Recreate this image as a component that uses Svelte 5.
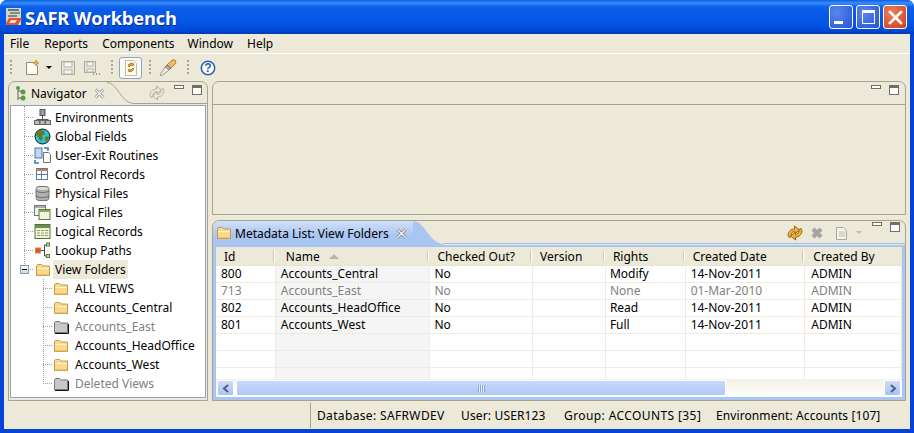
<script>
  const tree = [
    ['env', 'Environments'], ['globe', 'Global Fields'], ['exit', 'User-Exit Routines'], ['ctl', 'Control Records'],
    ['db', 'Physical Files'], ['lf', 'Logical Files'], ['lr', 'Logical Records'], ['lp', 'Lookup Paths']
  ];
  const folders = [
    ['ALL VIEWS', false], ['Accounts_Central', false], ['Accounts_East', true],
    ['Accounts_HeadOffice', false], ['Accounts_West', false], ['Deleted Views', true]
  ];
  const cols = [
    { t: 'Id', w: 60 }, { t: 'Name', w: 155, sort: true }, { t: 'Checked Out?', w: 103 }, { t: 'Version', w: 73 },
    { t: 'Rights', w: 80 }, { t: 'Created Date', w: 120 }, { t: 'Created By', w: 97 }
  ];
  const rows = [
    ['800', 'Accounts_Central', 'No', '', 'Modify', '14-Nov-2011', 'ADMIN', false],
    ['713', 'Accounts_East', 'No', '', 'None', '01-Mar-2010', 'ADMIN', true],
    ['802', 'Accounts_HeadOffice', 'No', '', 'Read', '14-Nov-2011', 'ADMIN', false],
    ['801', 'Accounts_West', 'No', '', 'Full', '14-Nov-2011', 'ADMIN', false],
    ['', '', '', '', '', '', '', false],
    ['', '', '', '', '', '', '', false],
    ['', '', '', '', '', '', '', false]
  ];
</script>

{#snippet folder(gray)}
  <svg class="ic" width="16" height="16" viewBox="0 0 16 16">
    {#if gray}
      <path d="M1.500 13.500V4l1-1.500h4L8 4h6.500v9.500z" fill="#c8c8c8" stroke="#777"/>
      <path d="M2 14.500h13.500V5" fill="none" stroke="#111"/>
    {:else}
      <path d="M1.500 13.500V4l1-1.500h4L8 4h6.500v9.500z" fill="#fbd98a" stroke="#c29a4f"/>
      <path d="M2.500 6.500h11" stroke="#fff3cf"/>
      <path d="M2 13h12" stroke="#e8a94a"/>
    {/if}
  </svg>
{/snippet}

{#snippet minmax()}
  <span class="minmax">
    <svg width="10" height="4" viewBox="0 0 10 4"><rect x="0.500" y="0.500" width="9" height="3" fill="#fff" stroke="#716f64"/></svg>
    <svg width="10" height="10" viewBox="0 0 10 10"><rect x="0.500" y="0.500" width="9" height="9" fill="#fff" stroke="#716f64"/><path d="M1 2h8" stroke="#716f64" stroke-width="2"/></svg>
  </span>
{/snippet}

{#snippet sync(c1, c2)}
  <svg width="16" height="16" viewBox="0 0 16 16">
    <path d="M1 10.500C1 6.500 4 4 7.500 4V1l5 4-5 4V6.500C5.500 6.500 4 8 4 10.500L2.500 13z" fill={c1} stroke={c2} stroke-linejoin="round"/>
    <path d="M15 5.500C15 9.500 12 12 8.500 12v3l-5-4 5-4v2.500C10.500 9.500 12 8 12 5.500L13.500 3z" fill={c1} stroke={c2} stroke-linejoin="round"/>
  </svg>
{/snippet}

{#snippet treeIcon(k)}
  <svg class="ic" width="17" height="17" viewBox="0 0 17 17">
    {#if k === 'env'}
      <rect x="6" y="0.500" width="5" height="6" fill="#99a" stroke="#556"/>
      <path d="M8.500 7v3M2.500 10.500h12" stroke="#555" fill="none"/>
      <rect x="0.500" y="11.500" width="5" height="4" fill="#bbb" stroke="#666"/>
      <rect x="6" y="11.500" width="5" height="4" fill="#bbb" stroke="#666"/>
      <rect x="11.500" y="11.500" width="5" height="4" fill="#bbb" stroke="#666"/>
    {:else if k === 'globe'}
      <circle cx="8.500" cy="8.500" r="7.500" fill="#28c4e0" stroke="#111"/>
      <path d="M5 2l5 1 1 3-3 2 1 3-3 2-2-4-2-2zM11 9l4-1-1 4-3 2z" fill="#6a7a20"/>
    {:else if k === 'exit'}
      <rect x="1" y="1" width="7" height="10" fill="#bcd8f4" stroke="#4a78b8"/>
      <path d="M9.500 5.500h5l2 2v8h-7z" fill="#fff" stroke="#66785a"/>
      <path d="M10 1h4v3M1 13v3h4" fill="none" stroke="#3a70c0" stroke-width="1.500"/>
    {:else if k === 'ctl'}
      <rect x="2.500" y="2.500" width="11" height="11" fill="#fff" stroke="#567ca8"/>
      <path d="M2 3h12v2H2z" fill="#cc7a50"/>
      <path d="M3 8.500h10M7.500 5v8" stroke="#567ca8"/>
    {:else if k === 'db'}
      <rect x="2" y="1.500" width="13" height="14" rx="3" fill="#b0b0ac" stroke="#777"/>
      <path d="M2 6c3 2 10 2 13 0M2 11c3 2 10 2 13 0" fill="none" stroke="#666"/>
      <ellipse cx="8.500" cy="3.500" rx="6" ry="1.500" fill="#ddd"/>
    {:else if k === 'lf'}
      <rect x="0.500" y="1.500" width="11" height="10" fill="#f4f4ee" stroke="#777"/>
      <path d="M1 3h10" stroke="#aaa" stroke-width="2"/>
      <rect x="5" y="5.500" width="11" height="10" fill="#f1f3de" stroke="#5a7a3c"/>
      <path d="M5 7h11" stroke="#8caa5a" stroke-width="2"/>
    {:else if k === 'lr'}
      <rect x="1" y="1.500" width="15" height="14" fill="#f0f3da" stroke="#55703a"/>
      <path d="M1 3.500h15" stroke="#6e8f49" stroke-width="3"/>
      <path d="M3 7.500h11M3 10h11M3 12.500h11" stroke="#8aa060" stroke-dasharray="3 1"/>
    {:else}
      <rect x="1.500" y="6" width="5" height="5" fill="#e0553a" stroke="#c98a30"/>
      <path d="M7 8.500h3M10.500 3v11M10.500 3h2M10.500 14h2" stroke="#444" fill="none"/>
      <rect x="12.500" y="1" width="3" height="3" fill="#cde0a0" stroke="#557a2c"/>
      <rect x="12.500" y="12.500" width="3" height="3" fill="#cde0a0" stroke="#557a2c"/>
    {/if}
  </svg>
{/snippet}

<div class="win">
  <header class="title">
    <svg class="logo" width="17" height="18" viewBox="0 0 17 18">
      <rect x="1" y="0" width="15" height="17" fill="#d8d4c8"/>
      <path d="M3 2h11" stroke="#2a5a9a" stroke-width="1.500"/><path d="M5 5h10" stroke="#5a8a3a" stroke-width="1.500"/><path d="M3 8h9" stroke="#333"/>
      <path d="M4 10h13l-4 7H0z" fill="#e0552f"/>
      <path d="M6 12h6l-2 3H4z" fill="#f8e0d0"/>
    </svg>
    <span class="tt">SAFR Workbench</span>
    <span class="btns">
      <span class="wb blue"><i class="mn"></i></span>
      <span class="wb blue"><i class="mx"></i></span>
      <span class="wb red">
        <svg width="15" height="15" viewBox="0 0 15 15"><path d="M2 2l11 11M13 2L2 13" stroke="#fff" stroke-width="2.600" stroke-linecap="square"/></svg>
      </span>
    </span>
  </header>

  <div class="body">
    <nav class="menu">
      <span>File</span><span>Reports</span><span>Components</span><span>Window</span><span>Help</span>
    </nav>

    <div class="tools">
      <i class="grip g1"></i>
      <svg width="18" height="18" viewBox="0 0 18 18"><path d="M1.500 3.500h8l3 3v9h-11z" fill="#fdfdf2" stroke="#8a8f80"/><path d="M11 1l1 2 2 1-2 1-1 2-1-2-2-1 2-1z" fill="#f0b030" stroke="#b07810" stroke-width=".5"/></svg>
      <i class="caret"></i>
      <svg class="disk" width="16" height="16" viewBox="0 0 16 16"><path d="M1.500 1.500h13v13h-13z" fill="#e8e6da" stroke="#a8a89c"/><path d="M4 2h8v5H4zM4 10h8v4H4z" fill="#f6f6f0" stroke="#b4b4a8"/></svg>
      <svg class="disk2" width="18" height="16" viewBox="0 0 18 16"><path d="M1.500 1.500h11v11h-11z" fill="#e8e6da" stroke="#a8a89c"/><path d="M4 2h6v4H4zM4 9h6v3H4z" fill="#f6f6f0" stroke="#b4b4a8"/><path d="M10 14h1M13 14h1M16 14h1" stroke="#999" stroke-width="2"/></svg>
      <i class="grip g2"></i>
      <span class="toggled">
        <svg width="16" height="16" viewBox="0 0 16 16"><path d="M2.500 .5h8l3 3v12h-11z" fill="#fdfdf2" stroke="#c4be9c"/><path d="M5 5l3-2 3 1-1 2-2-1-2 2zM11 9l-3 3-3-1 1-2 2 1 2-2z" fill="#e8a030" stroke="#a06010" stroke-width=".7"/></svg>
      </span>
      <i class="grip g3"></i>
      <svg width="18" height="18" viewBox="0 0 18 18"><path d="M8 6l5-5h3l1 3-5 5z" fill="#f5b860" stroke="#b88038"/><path d="M8 6l4 3-2 2-4-3z" fill="#aaa" stroke="#777"/><path d="M6 8l4 3-8 6-1-1z" fill="#f4f0e0" stroke="#999"/></svg>
      <i class="grip g4"></i>
      <svg width="16" height="16" viewBox="0 0 16 16"><circle cx="8" cy="8" r="6.700" fill="#fff" stroke="#2a62b0" stroke-width="1.600"/><text x="8" y="12" text-anchor="middle" class="q">?</text></svg>
    </div>

    <main class="work">
      <section class="nav panel">
        <div class="ph">
          <div class="tab plain">
            <svg width="12" height="17" viewBox="0 0 12 17"><path d="M3 2v13M3 6h5M3 13h5" stroke="#666" fill="none"/><circle cx="3" cy="3" r="2" fill="#5b9a4a"/><circle cx="8" cy="7" r="2.500" fill="#5b9a4a"/><circle cx="8" cy="13" r="2.500" fill="#5b9a4a"/></svg>
            <span>Navigator</span>
            <svg class="x" width="11" height="11" viewBox="0 0 11 11"><path d="M1.500 1.500l8 8M9.500 1.500l-8 8" stroke="#8a8a80" stroke-width="2.800"/><path d="M1.500 1.500l8 8M9.500 1.500l-8 8" stroke="#fff" stroke-width="1.200"/></svg>
          </div>
          <svg class="curve" width="26" height="22" viewBox="0 0 26 22"><path d="M0 .5c10 0 14 20 26 21" fill="none" stroke="#a7a38f"/></svg>
          <span class="phr">
            {@render sync('#ece9d8', '#b4b2a4')}
            {@render minmax()}
          </span>
        </div>
        <div class="tree">
          <ul class="t1">
            {#each tree as [k, label]}
              <li>{@render treeIcon(k)}<span>{label}</span></li>
            {/each}
            <li class="open">
              <i class="minus"></i>
              {@render folder(false)}<span class="sel">View Folders</span>
            </li>
          </ul>
          <ul class="t2">
            {#each folders as [label, off]}
              <li class:off>{@render folder(off)}<span>{label}</span></li>
            {/each}
          </ul>
        </div>
      </section>

      <div class="right">
        <section class="editor panel">
          <div class="ph empty">{@render minmax()}</div>
        </section>

        <section class="list panel">
          <div class="ph meta">
            <div class="tab blue-tab">
              {@render folder(false)}
              <span>Metadata List: View Folders</span>
              <svg class="x" width="11" height="11" viewBox="0 0 11 11"><path d="M1.500 1.500l8 8M9.500 1.500l-8 8" stroke="#7c7c74" stroke-width="2.800"/><path d="M1.500 1.500l8 8M9.500 1.500l-8 8" stroke="#fff" stroke-width="1.200"/></svg>
            </div>
            <svg class="curve bc" width="30" height="24" viewBox="0 0 30 24"><path d="M0 0c12 0 16 22 30 23v1H0z" fill="#a9c5f1"/></svg>
            <span class="phr">
              {@render sync('#efb040', '#9a6a10')}
              <svg class="del" width="14" height="14" viewBox="0 0 14 14"><path d="M3 3l8 8M11 3l-8 8" stroke="#a4a4a0" stroke-width="4.200"/></svg>
              <svg width="16" height="16" viewBox="0 0 16 16"><path d="M2.500 2.500h7l3 3v9h-10z" fill="#f4f3ea" stroke="#a8a8a0"/><path d="M5 7h6M5 9h6M5 11h6" stroke="#b8b8b0"/></svg>
              <i class="caret dim"></i>
              {@render minmax()}
            </span>
          </div>
          <div class="tblwrap">
            <div class="thead">
              {#each cols as c}
                <div class="th" style="width:{c.w}px"><span>{c.t}</span>{#if c.sort}<i class="sort"></i>{/if}</div>
              {/each}
            </div>
            <div class="tbody">
              {#each rows as r}
                <div class="tr" class:off={r[7]}>
                  {#each cols as c, i}
                    <div class="td" class:sorted={i === 1} style="width:{c.w}px">{r[i]}</div>
                  {/each}
                </div>
              {/each}
            </div>
            <div class="hs">
              <span class="sb"><svg width="8" height="9" viewBox="0 0 8 9"><path d="M6 1L2 4.500 6 8" fill="none" stroke="#4d6185" stroke-width="2"/></svg></span>
              <span class="thumb"><i></i></span>
              <span class="track"></span>
              <span class="sb"><svg width="8" height="9" viewBox="0 0 8 9"><path d="M2 1l4 3.500L2 8" fill="none" stroke="#4d6185" stroke-width="2"/></svg></span>
            </div>
          </div>
        </section>
      </div>
    </main>

    <footer class="status">
      <span class="s0">Database: SAFRWDEV</span>
      <span class="s1">User: USER123</span>
      <span class="s2">Group: ACCOUNTS [35]</span>
      <span class="s3">Environment: Accounts [107]</span>
    </footer>
  </div>
</div>

<style>
  :global(body) { margin: 0; background: #fff; }
  .win {
    width: 914px; height: 433px; display: flex; flex-direction: column; box-sizing: border-box; overflow: hidden;
    font: 12px "Noto Sans", sans-serif; color: #000;
    background: #0443d6; border-radius: 7px 7px 0 0;
  }
  .title {
    height: 34px; flex: none; display: flex; align-items: center; padding: 0 6px 0 5px; box-sizing: border-box;
    background: linear-gradient(#0a5fe6 0, #3b8cf8 3px, #0a5ee8 7px, #0355e5 24px, #0248d4 31px, #0237b8 34px);
  }
  .logo { margin-right: 3px; }
  .tt { font: bold 18.300px "Open Sans", sans-serif; color: #fff; text-shadow: 1px 1px 0 #0a2a90; letter-spacing: -.15px; }
  .btns { margin-left: auto; display: flex; gap: 3px; padding-right: 1px; }
  .wb {
    width: 22px; height: 22px; border: 1px solid #fff; border-radius: 3px; box-sizing: content-box;
    display: flex; align-items: center; justify-content: center; position: relative;
  }
  .blue { background: radial-gradient(circle at 30% 30%, #5b86ee, #3563dd 70%, #2b54ca); }
  .red { background: radial-gradient(circle at 35% 30%, #e9805f, #d95030 70%, #c33f1f); }
  .mn { position: absolute; left: 4px; bottom: 4px; width: 9px; height: 3px; background: #fff; }
  .mx { width: 11px; height: 10px; border: 1px solid #fff; border-top-width: 3px; }
  .body { flex: 1; min-height: 0; margin: 0 4px 4px; background: #ece9d8; display: flex; flex-direction: column; }
  .menu { height: 19px; flex: none; display: flex; gap: 14px; padding-left: 6px; align-items: center; border-bottom: 1px solid #fff; }
  .menu span { line-height: 19px; }
  .menu span:first-child { margin-right: 1px; }
  .menu span:nth-child(3) { margin-right: -1px; }
  .tools { height: 27px; flex: none; display: flex; align-items: center; padding-left: 6px; box-sizing: border-box; }
  .grip { width: 2px; height: 16px; background-image: linear-gradient(#a8a590 50%, transparent 50%); background-size: 2px 4px; }
  .g1 { margin-right: 13px; }
  .g2 { margin-left: 10px; margin-right: 6px; }
  .g3 { margin-left: 7px; margin-right: 8px; }
  .g4 { margin-left: 10px; margin-right: 11px; }
  .caret { width: 0; height: 0; border: 3px solid transparent; border-top: 3px solid #000; border-bottom: 0; margin: 0 8px 0 3px; }
  .caret.dim { border-top-color: #bbb; margin: 0 2px 0 0; }
  .disk { margin-right: 7px; }
  .toggled { width: 21px; height: 20px; border: 1px solid #8ca5c5; border-radius: 3px; background: #fbfaf6; display: flex; align-items: center; justify-content: center; }
  .work { flex: 1; min-height: 0; display: flex; gap: 4px; padding: 0 4px 0 4px; height: 320px; }
  .panel { border: 1px solid #a7a38f; border-radius: 7px 7px 0 0; box-sizing: border-box; background: #ece9d8; display: flex; flex-direction: column; }
  .nav { width: 200px; height: 320px; flex: none; }
  .ph { height: 22px; flex: none; display: flex; position: relative; }
  .tab { display: flex; align-items: center; gap: 4px; height: 22px; box-sizing: border-box; }
  .plain { padding-left: 6px; border-radius: 7px 0 0 0; }
  .plain .x { margin-left: 3px; margin-right: 2px; }
  .curve { flex: none; }
  .phr { margin-left: auto; display: flex; align-items: center; gap: 7px; padding-right: 5px; border-bottom: 1px solid #a7a38f; height: 21px; flex: 1; justify-content: flex-end; }
  .ph.empty { justify-content: flex-end; padding-right: 6px; }
  .minmax { display: inline-flex; gap: 8px; align-items: flex-start; align-self: flex-start; padding-top: 3px; margin-left: 2px; }
  .tree { flex: 1; margin: 1px 1px 2px; border: 1px solid #90a4bc; background: #fff; padding-top: 2px; position: relative; }
  .tree ul { list-style: none; margin: 0; padding: 0; position: relative; }
  .tree li { height: 19px; display: flex; align-items: center; white-space: nowrap; position: relative; }
  .t1 li { padding-left: 23px; }
  .t1 li .ic { margin-right: 4px; flex: none; }
  .t1 li::before { content: ''; position: absolute; left: 13px; top: 9px; width: 9px; border-top: 1px dotted #a0a090; }
  .t1::before { content: ''; position: absolute; left: 13px; top: -2px; height: 164px; border-left: 1px dotted #a0a090; }
  .t1 .open { padding-left: 24px; }
  .t1 .open .ic { margin-right: 3px; }
  .sel { background: #ece9d8; padding: 0 2px; margin-left: -1px; line-height: 19px; }
  .minus { position: absolute; left: 9px; top: 5px; width: 7px; height: 7px; border: 1px solid #7b9ebd; background: linear-gradient(#fff, #d8d4c4); z-index: 1; }
  .minus::after { content: ''; position: absolute; left: 1px; top: 3px; width: 5px; height: 1px; background: #000; }
  .t2 li { padding-left: 42px; }
  .t2 li .ic { margin-right: 6px; flex: none; }
  .t2 li::before { content: ''; position: absolute; left: 32px; top: 9px; width: 9px; border-top: 1px dotted #a0a090; }
  .t2::before { content: ''; position: absolute; left: 32px; top: 0; height: 105px; border-left: 1px dotted #a0a090; }
  .t2 .off { color: #808080; }
  .right { flex: 1; min-width: 0; display: flex; flex-direction: column; gap: 5px; }
  .editor { height: 134px; flex: none; }
  .editor .ph { border-bottom: 1px solid #a7a38f; box-sizing: content-box; }
  .list { height: 181px; flex: none; border-radius: 7px 7px 0 0; }
  .meta { height: 24px; }
  .blue-tab {
    padding-left: 3px; gap: 3px; height: 24px; background: linear-gradient(#d2e0f8, #a9c5f1 60%);
    border-radius: 7px 0 0 0;
  }
  .blue-tab .x { margin-left: 4px; margin-right: 6px; }
  .meta .phr { height: 23px; gap: 6px; border-bottom: none; box-shadow: inset 0 -1px 0 #9dbbf0; }
  .meta .minmax { margin-left: 2px; padding-top: 1px; }
  .del { margin-left: 1px; margin-right: 4px; }
  .tblwrap { flex: 1; min-height: 0; border: 3px solid #a9c5f1; border-top-width: 2px; border-bottom-width: 3px; background: #fff; display: flex; flex-direction: column; overflow: hidden; }
  .thead { height: 19px; display: flex; background: #ece9d8; border-bottom: 1px solid #e6e3d2; flex: none; box-sizing: border-box; }
  .th { box-sizing: border-box; display: flex; align-items: center; padding-left: 7px; position: relative; white-space: nowrap; }
  .th::after { content: ''; position: absolute; right: 1px; top: 3px; bottom: 3px; width: 1px; background: #cbc7b8; border-right: 1px solid #fff; }
  .th:first-child { padding-left: 8px; }
  .th:nth-child(2) { padding-left: 10px; }
  .th:last-child { padding-left: 8px; }
  .th:last-child::after { display: none; }
  .sort { width: 0; height: 0; border: 5px solid transparent; border-bottom: 5px solid #b8b5a4; border-top: 0; margin-left: 9px; }
  .tbody { height: 113px; overflow: hidden; }
  .tr { display: flex; height: 17px; }
  .tr.off { color: #808080; }
  .td { box-sizing: border-box; height: 17px; line-height: 16px; padding-left: 4px; border-right: 1px solid #efebde; border-bottom: 1px solid #efebde; white-space: nowrap; overflow: hidden; }
  .td:nth-child(1), .td:nth-child(2), .td:nth-child(6) { padding-left: 5px; }
  .td:last-child { padding-left: 6px; }
  .sorted { background: #f5f5f5; }
  .hs { height: 18px; flex: none; display: flex; align-items: stretch; background: linear-gradient(#f3f1e8, #fefefb); padding: 1px; box-sizing: border-box; }
  .sb { width: 15px; flex: none; border: 1px solid #fff; border-radius: 2px; background: linear-gradient(#cfdcf8, #aac2f2); display: flex; align-items: center; justify-content: center; }
  .thumb { width: 488px; margin-left: 2px; flex: none; border: 1px solid #fff; border-radius: 2px; background: linear-gradient(#c7d8fa, #b0c8f6); display: flex; align-items: center; justify-content: center; }
  .thumb i { width: 7px; height: 7px; background-image: linear-gradient(90deg, #8aa4da 50%, #eef3fd 50%); background-size: 2px 7px; }
  .track { flex: 1; }
  .status { height: 28px; flex: none; display: flex; align-items: center; margin-top: 1px; padding-left: 306px; }
  .status span { white-space: nowrap; flex: none; }
  .s0 { width: 144px; border-left: 1px solid #a7a38f; padding-left: 6px; height: 25px; line-height: 25px; letter-spacing: .35px; }
  .s1 { width: 103px; letter-spacing: .15px; }
  .s2 { width: 152px; letter-spacing: .4px; }
  .s3 { letter-spacing: .1px; }
  .q { font: bold 12px "Liberation Sans", sans-serif; fill: #2a62b0; }
</style>
